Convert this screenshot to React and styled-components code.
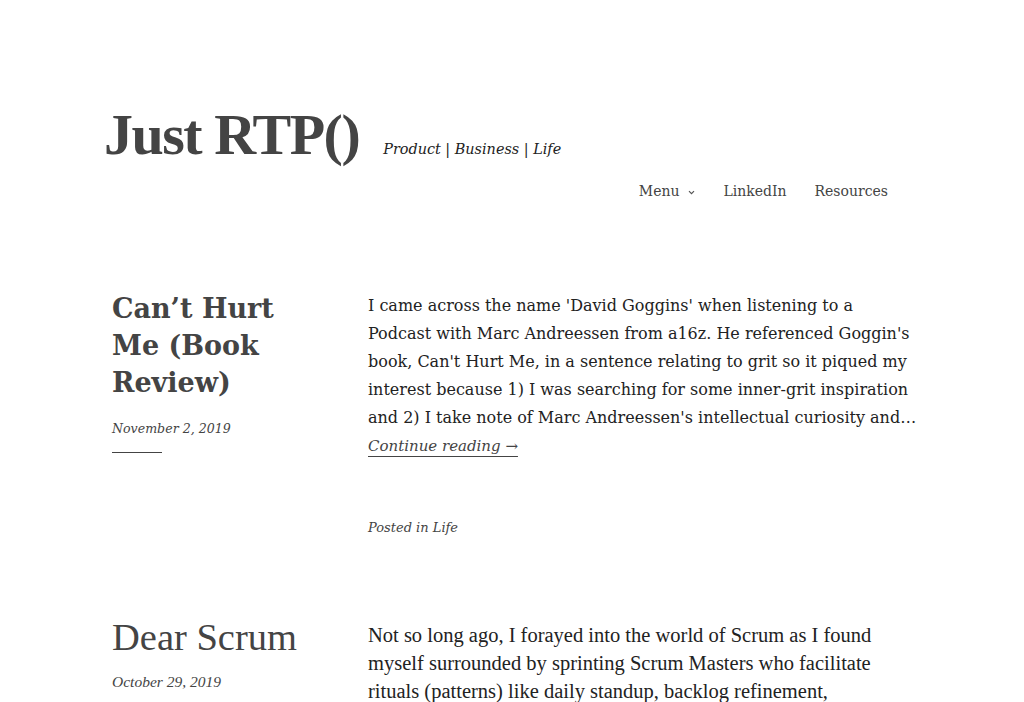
import React from "react";
import styled, { createGlobalStyle } from "styled-components";

const GlobalStyle = createGlobalStyle`
  body {
    margin: 0;
    background: #fff;
    font-family: "DejaVu Serif", "Liberation Serif", serif;
    color: #222;
  }
`;

const Page = styled.div`
  width: 800px;
  margin: 0 auto;
`;

const Header = styled.header`
  display: flex;
  align-items: flex-start;
  justify-content: space-between;
  padding-top: 106px;
  height: 290px;
  box-sizing: border-box;
`;

const Branding = styled.div`
  display: flex;
  align-items: baseline;
  gap: 24px;
  margin-left: -8px;
`;

const SiteTitle = styled.h1`
  margin: 0;
  font-family: "Liberation Serif", serif;
  font-size: 58px;
  font-weight: bold;
  color: #444;
  line-height: 1;
  letter-spacing: -1.5px;
`;

const Tagline = styled.p`
  margin: 0;
  font-style: italic;
  font-size: 14.4px;
  color: #222;
`;

const Nav = styled.nav`
  display: flex;
  align-items: center;
  gap: 28px;
  margin-top: 75px;
  margin-right: 24px;
`;

const NavLink = styled.a`
  font-size: 14px;
  line-height: 20px;
  color: #444;
  text-decoration: none;
  display: flex;
  align-items: center;
  gap: 9px;
`;

const ChevronIcon = styled.svg`
  margin-top: 3px;
`;

const Chevron = () => (
  <ChevronIcon width="7" height="5" viewBox="0 0 7 5" fill="none">
    <path d="M1 1.2 3.5 3.7 6 1.2" stroke="#555" strokeWidth="1.2" />
  </ChevronIcon>
);

const Post = styled.article`
  display: grid;
  grid-template-columns: 256px 544px;
  margin-bottom: 77px;
  font-family: ${({ fallback }) =>
    fallback ? '"Liberation Serif", serif' : '"DejaVu Serif", serif'};
`;

const Meta = styled.div`
  padding-right: 48px;
`;

const Title = styled.h2`
  margin: 0;
  font-size: ${({ fallback }) => (fallback ? "38.5px" : "27px")};
  font-weight: ${({ fallback }) => (fallback ? "normal" : "bold")};
  color: #444;
  line-height: 37px;
`;

const PostDate = styled.p`
  margin: ${({ fallback }) => (fallback ? "17px" : "20px")} 0 0;
  font-style: italic;
  font-size: ${({ fallback }) => (fallback ? "15.5px" : "12.6px")};
  color: #444;
  ${({ divider }) =>
    divider &&
    `
    &::after {
      content: "";
      display: block;
      width: 50px;
      margin-top: 16px;
      border-bottom: 1px solid #444;
    }
  `}
`;

const Body = styled.div`
  margin-top: 2px;
  margin-right: -8px;
`;

const Excerpt = styled.p`
  margin: 0;
  font-size: ${({ fallback }) => (fallback ? "20.5px" : "16px")};
  line-height: 28px;
  color: #222;
`;

const MoreLink = styled.a`
  display: inline-block;
  font-size: 15px;
  line-height: 28px;
  font-style: italic;
  color: #444;
  text-decoration: underline;
  text-underline-offset: 5px;
`;

const Footer = styled.p`
  margin: 54px 0 0;
  font-style: italic;
  font-size: 13px;
  line-height: 28px;
  color: #444;
`;

const posts = [
  {
    title: "Can’t Hurt Me (Book Review)",
    date: "November 2, 2019",
    text:
      "I came across the name 'David Goggins' when listening to a Podcast with Marc Andreessen from a16z. He referenced Goggin's book, Can't Hurt Me, in a sentence relating to grit so it piqued my interest because 1) I was searching for some inner-grit inspiration and 2) I take note of Marc Andreessen's intellectual curiosity and…",
    more: true,
    category: "Life",
  },
  {
    title: "Dear Scrum",
    date: "October 29, 2019",
    text:
      "Not so long ago, I forayed into the world of Scrum as I found myself surrounded by sprinting Scrum Masters who facilitate rituals (patterns) like daily standup, backlog refinement, retrospectives and sprint planning.",
    fallback: true,
  },
];

const App = () => (
  <>
    <GlobalStyle />
    <Page>
      <Header>
        <Branding>
          <SiteTitle>Just RTP()</SiteTitle>
          <Tagline>Product | Business | Life</Tagline>
        </Branding>
        <Nav>
          <NavLink>
            Menu <Chevron />
          </NavLink>
          <NavLink>LinkedIn</NavLink>
          <NavLink>Resources</NavLink>
        </Nav>
      </Header>
      {posts.map((post) => (
        <Post key={post.title} fallback={post.fallback}>
          <Meta>
            <Title fallback={post.fallback}>{post.title}</Title>
            <PostDate divider={post.more} fallback={post.fallback}>
              {post.date}
            </PostDate>
          </Meta>
          <Body>
            <Excerpt fallback={post.fallback}>{post.text}</Excerpt>
            {post.more && <MoreLink>Continue reading →</MoreLink>}
            {post.category && <Footer>Posted in {post.category}</Footer>}
          </Body>
        </Post>
      ))}
    </Page>
  </>
);

export default App;
